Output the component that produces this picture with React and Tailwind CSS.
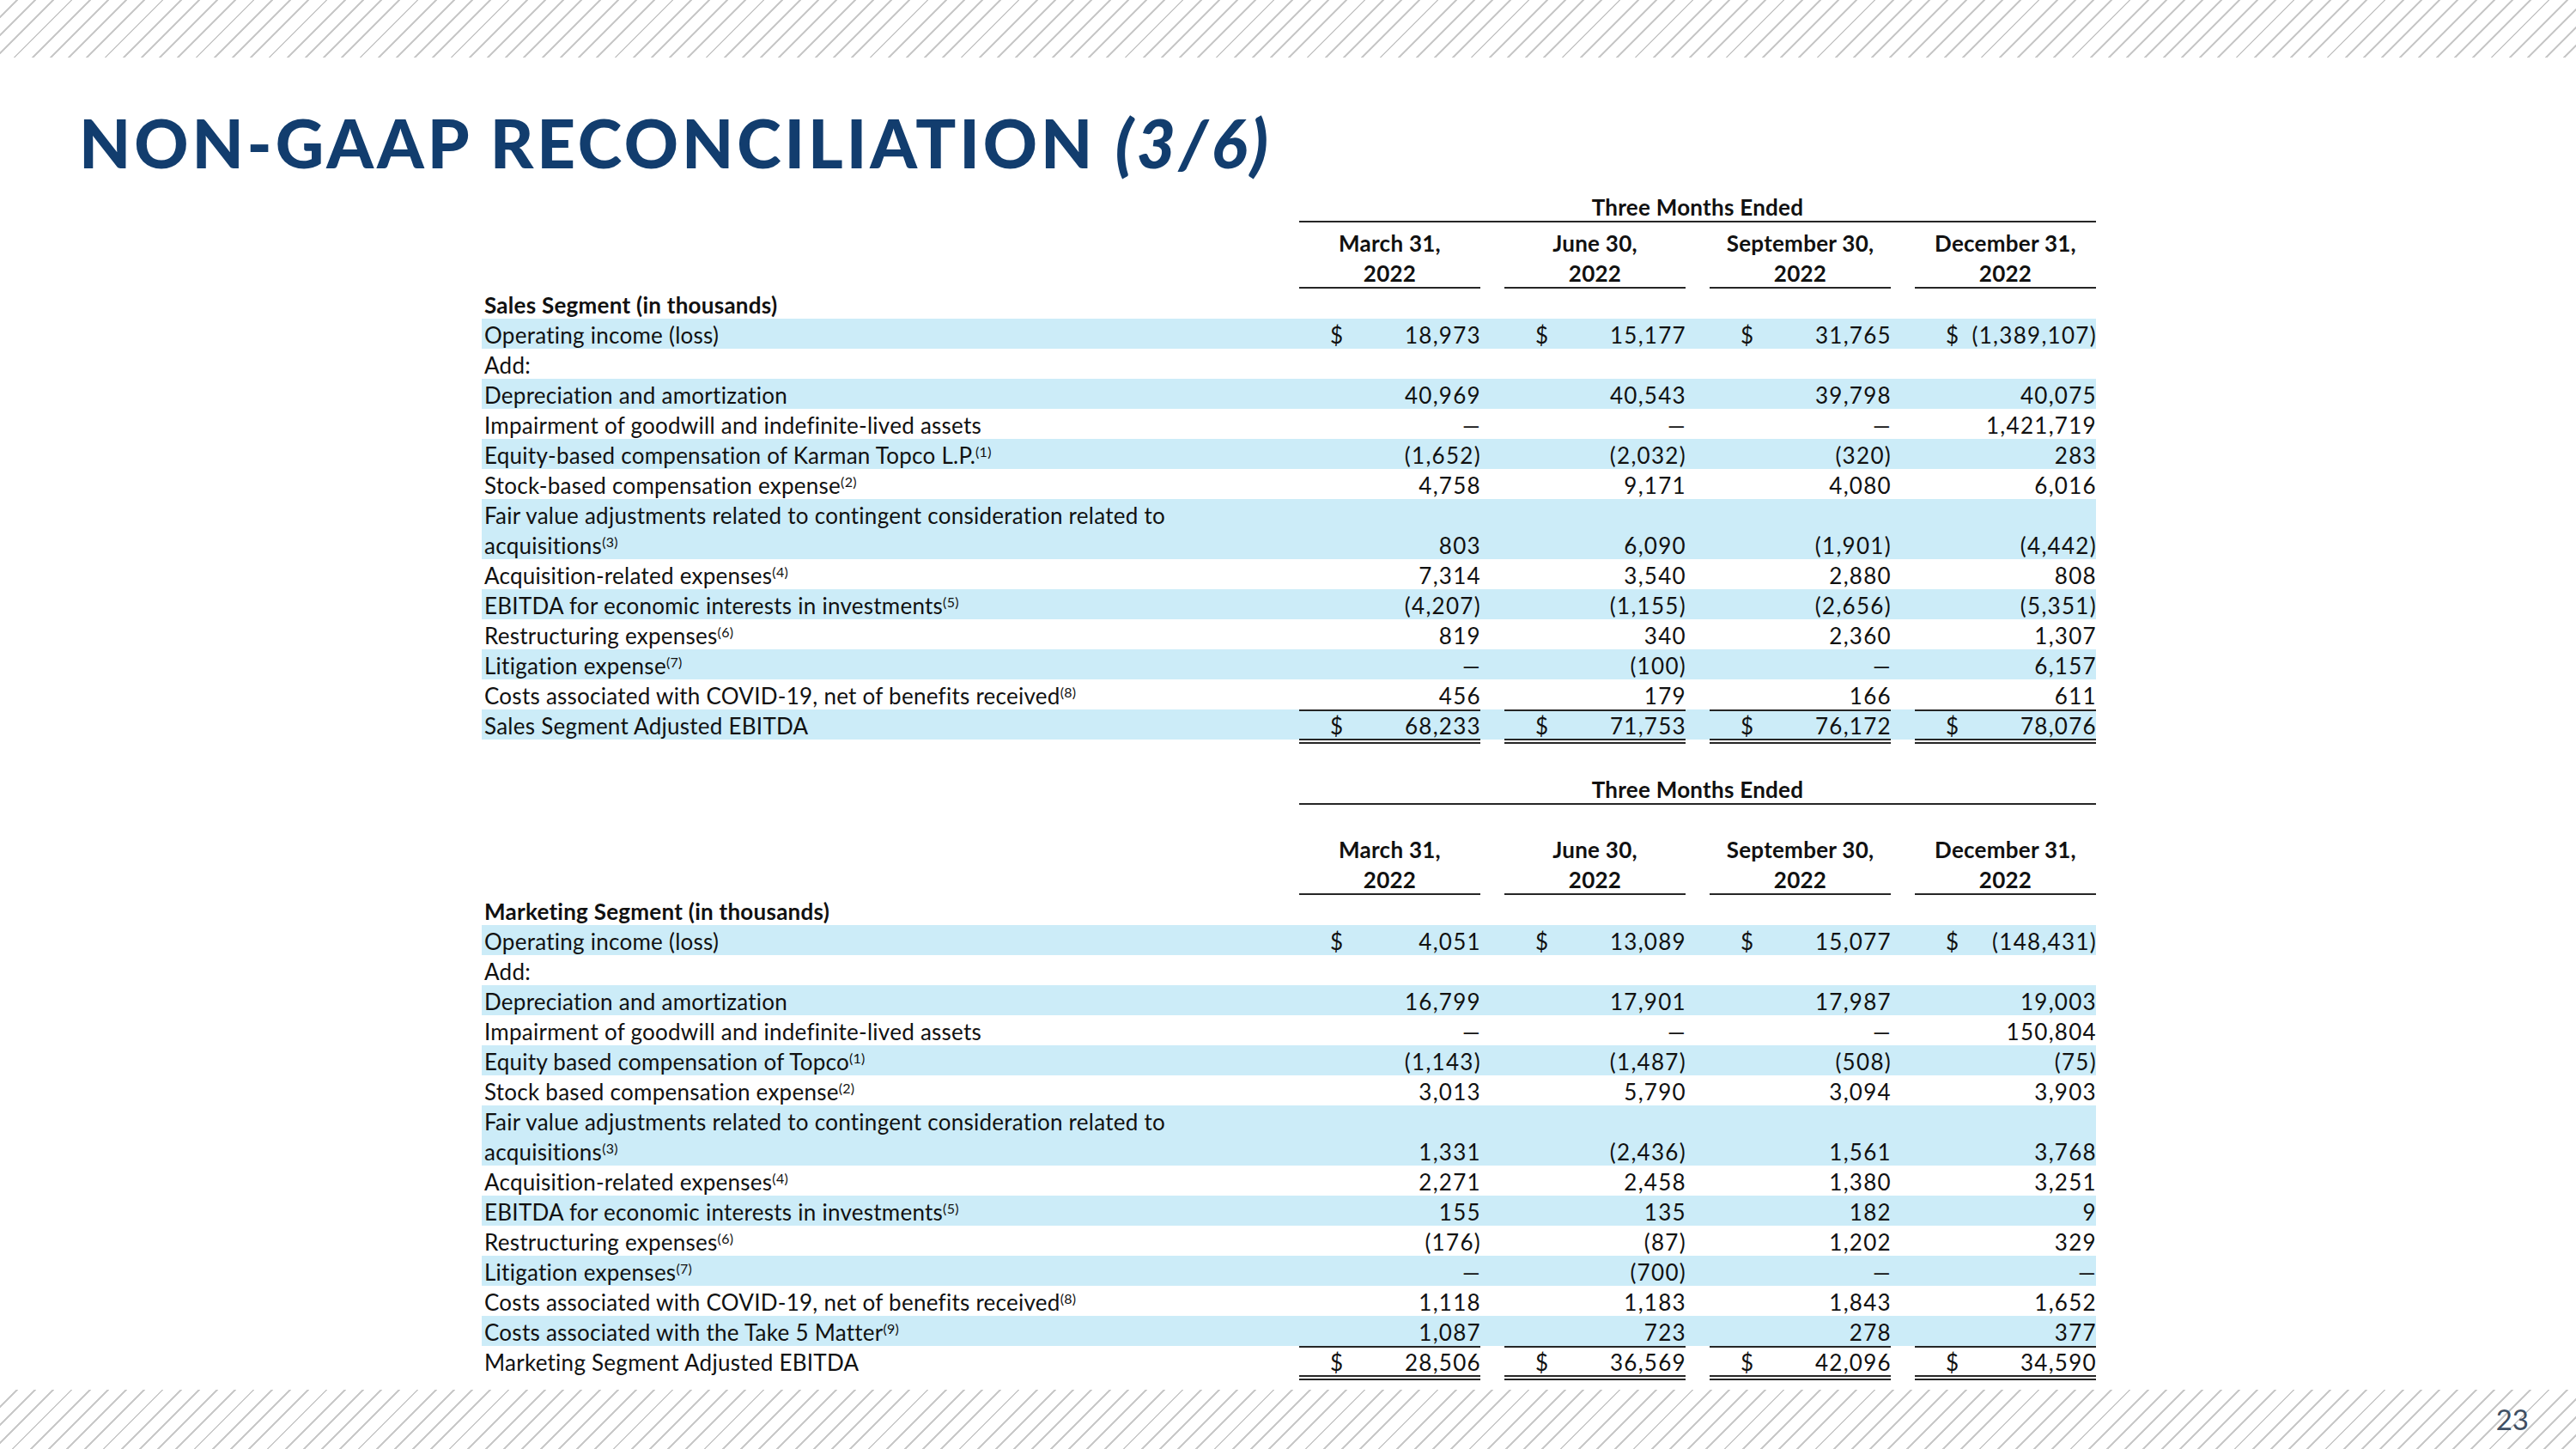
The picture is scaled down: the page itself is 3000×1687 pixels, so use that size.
import React from 'react';

const D = '—';

const salesRows = [
  { label: 'Operating income (loss)', vals: ['18,973', '15,177', '31,765', '(1,389,107)'], dollar: true },
  { label: 'Add:', vals: ['', '', '', ''] },
  { label: 'Depreciation and amortization', vals: ['40,969', '40,543', '39,798', '40,075'] },
  { label: 'Impairment of goodwill and indefinite-lived assets', vals: [D, D, D, '1,421,719'] },
  { label: 'Equity-based compensation of Karman Topco L.P.', sup: '(1)', vals: ['(1,652)', '(2,032)', '(320)', '283'] },
  { label: 'Stock-based compensation expense', sup: '(2)', vals: ['4,758', '9,171', '4,080', '6,016'] },
  { label: 'acquisitions', first: 'Fair value adjustments related to contingent consideration related to', sup: '(3)', vals: ['803', '6,090', '(1,901)', '(4,442)'] },
  { label: 'Acquisition-related expenses', sup: '(4)', vals: ['7,314', '3,540', '2,880', '808'] },
  { label: 'EBITDA for economic interests in investments', sup: '(5)', vals: ['(4,207)', '(1,155)', '(2,656)', '(5,351)'] },
  { label: 'Restructuring expenses', sup: '(6)', vals: ['819', '340', '2,360', '1,307'] },
  { label: 'Litigation expense', sup: '(7)', vals: [D, '(100)', D, '6,157'] },
  { label: 'Costs associated with COVID-19, net of benefits received', sup: '(8)', vals: ['456', '179', '166', '611'] },
  { label: 'Sales Segment Adjusted EBITDA', vals: ['68,233', '71,753', '76,172', '78,076'], dollar: true, total: true },
];

const marketingRows = [
  { label: 'Operating income (loss)', vals: ['4,051', '13,089', '15,077', '(148,431)'], dollar: true },
  { label: 'Add:', vals: ['', '', '', ''] },
  { label: 'Depreciation and amortization', vals: ['16,799', '17,901', '17,987', '19,003'] },
  { label: 'Impairment of goodwill and indefinite-lived assets', vals: [D, D, D, '150,804'] },
  { label: 'Equity based compensation of Topco', sup: '(1)', vals: ['(1,143)', '(1,487)', '(508)', '(75)'] },
  { label: 'Stock based compensation expense', sup: '(2)', vals: ['3,013', '5,790', '3,094', '3,903'] },
  { label: 'acquisitions', first: 'Fair value adjustments related to contingent consideration related to', sup: '(3)', vals: ['1,331', '(2,436)', '1,561', '3,768'] },
  { label: 'Acquisition-related expenses', sup: '(4)', vals: ['2,271', '2,458', '1,380', '3,251'] },
  { label: 'EBITDA for economic interests in investments', sup: '(5)', vals: ['155', '135', '182', '9'] },
  { label: 'Restructuring expenses', sup: '(6)', vals: ['(176)', '(87)', '1,202', '329'] },
  { label: 'Litigation expenses', sup: '(7)', vals: [D, '(700)', D, D] },
  { label: 'Costs associated with COVID-19, net of benefits received', sup: '(8)', vals: ['1,118', '1,183', '1,843', '1,652'] },
  { label: 'Costs associated with the Take 5 Matter', sup: '(9)', vals: ['1,087', '723', '278', '377'] },
  { label: 'Marketing Segment Adjusted EBITDA', vals: ['28,506', '36,569', '42,096', '34,590'], dollar: true, total: true },
];

const dates = ['March 31,', 'June 30,', 'September 30,', 'December 31,'];

function Stripes() {
  return (
    <div className="w-full h-full bg-[repeating-linear-gradient(135deg,#ffffff_0px,#ffffff_13px,#c9c9c9_13px,#c9c9c9_15px)]" />
  );
}

function Header({ title, spaced }) {
  return (
    <div className="font-bold">
      <div className="flex h-[37px]">
        <div className="w-[952px]" />
        <div className="w-[928px] pt-[3px] border-b-2 border-[#262626] flex items-center justify-center">Three Months Ended</div>
      </div>
      <div className={`flex items-end ${spaced ? 'h-[68px]' : 'h-[40px]'}`}>
        <div className="w-[952px]" />
        <div className="flex gap-[28px]">
          {dates.map(d => (
            <div key={d} className="w-[211px] h-[35px] pt-[3px] flex items-center justify-center">{d}</div>
          ))}
        </div>
      </div>
      <div className="flex h-[37px]">
        <div className="w-[952px]" />
        <div className="flex gap-[28px]">
          {dates.map(d => (
            <div key={d} className="w-[211px] h-[37px] pt-[3px] border-b-2 border-[#262626] flex items-center justify-center">2022</div>
          ))}
        </div>
      </div>
      <div className="h-[35px] pt-[3px] flex items-center pl-[3px]">{title}</div>
    </div>
  );
}

function Row({ row, blue }) {
  const tall = !!row.first;
  return (
    <div className={`flex items-end ${tall ? 'h-[70px]' : 'h-[35px]'} ${blue ? 'bg-[#ccecf8]' : ''}`}>
      <div className="w-[952px] pl-[3px]">
        {tall && <div className="h-[35px] pt-[3px] flex items-center">{row.first}</div>}
        <div className="h-[35px] pt-[3px] flex items-center">
          <span>
            {row.label}
            {row.sup && <sup className="text-[16px]">{row.sup}</sup>}
          </span>
        </div>
      </div>
      <div className="flex gap-[28px] h-[35px] self-end">
        {row.vals.map((v, i) => (
          <div
            key={i}
            className={`w-[211px] flex items-start ${row.total ? 'h-[40px] border-t-2 border-b-[6px] border-double border-[#262626]' : 'h-[35px]'}`}
          >
            <div className={`w-full flex justify-between pt-[3px] ${row.total ? 'h-[32px] items-center' : 'h-[35px] items-center'} ${row.dollar ? 'pl-[36px]' : ''}`}>
              <span>{row.dollar ? '$' : ''}</span>
              <span className="tracking-[0.05em] -mr-[1px]">{v}</span>
            </div>
          </div>
        ))}
      </div>
    </div>
  );
}

function Section({ title, rows, spaced }) {
  return (
    <div className="w-[1880px]">
      <Header title={title} spaced={spaced} />
      {rows.map((r, i) => (
        <Row key={r.label + i} row={r} blue={i % 2 === 0} />
      ))}
    </div>
  );
}

export default function App() {
  return (
    <div className="w-[3000px] h-[1687px] bg-white flex flex-col overflow-hidden font-['Lato',sans-serif] text-[26px] tracking-[0.01em] text-[#111111]">
      <div className="h-[67px] shrink-0">
        <Stripes />
      </div>

      <h1 className="mt-[60px] ml-[92px] h-[79px] text-[78px] leading-none font-black tracking-[0.05em] text-[#123d6e] whitespace-nowrap">
        NON-GAAP RECONCILIATION <span className="italic">(3/6)</span>
      </h1>

      <div className="mt-[16px] ml-[561px] flex flex-col gap-[39px]">
        <Section title="Sales Segment (in thousands)" rows={salesRows} />
        <Section title="Marketing Segment (in thousands)" rows={marketingRows} spaced />
      </div>

      <div className="mt-auto h-[69px] shrink-0 relative">
        <Stripes />
        <div className="absolute right-[55px] top-0 h-full flex items-center text-[33px] tracking-normal text-[#3f4f63]">23</div>
      </div>
    </div>
  );
}
